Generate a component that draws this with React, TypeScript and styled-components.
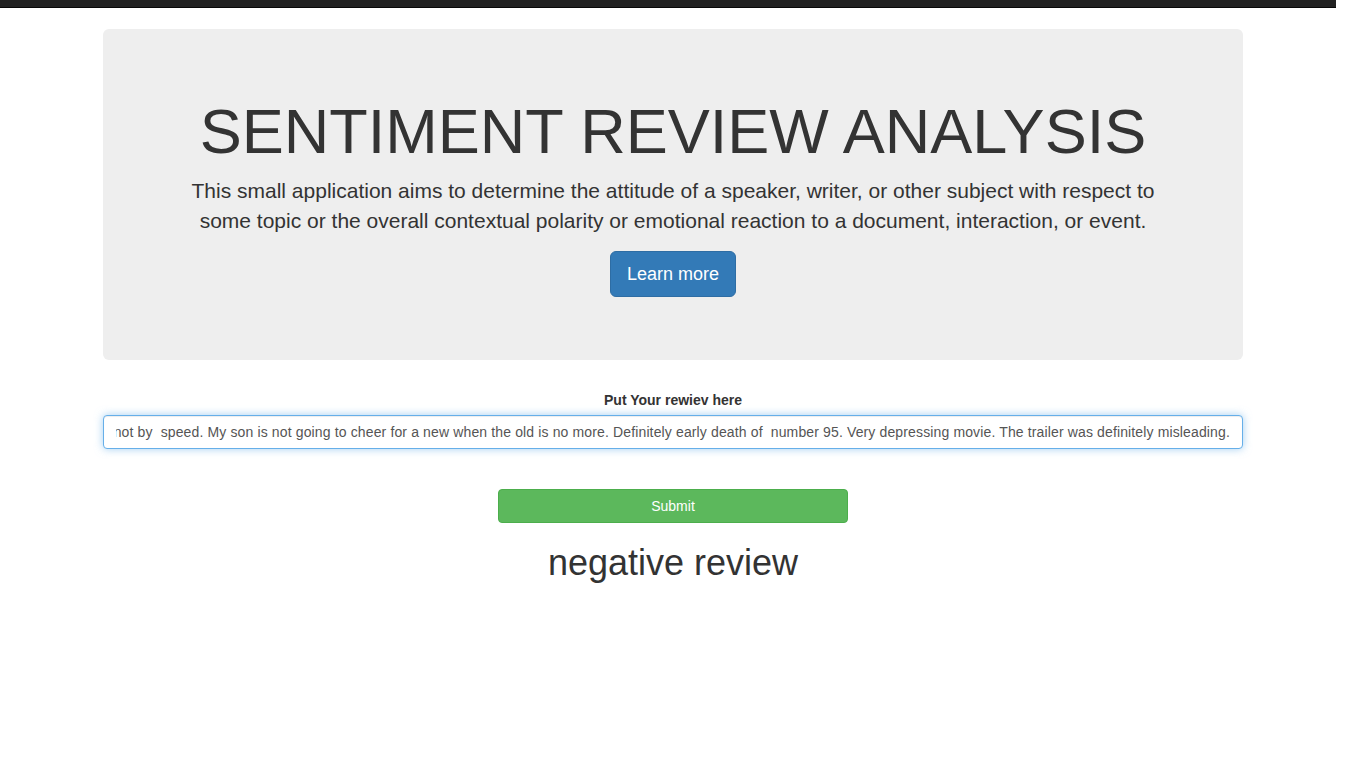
import React from "react";
import styled, { createGlobalStyle } from "styled-components";

const Global = createGlobalStyle`
  html, body { margin: 0; padding: 0; background: #fff; }
  body {
    font-family: "Liberation Sans", Arial, Helvetica, sans-serif;
    font-size: 14px;
    line-height: 1.42857;
    color: #333;
  }
  * { box-sizing: border-box; }
`;

const TopBar = styled.div`
  width: 1336px;
  height: 8px;
  background: #222;
  border-bottom: 1px solid #080808;
`;

const Page = styled.div`
  width: 1346px;
  padding-top: 21px;
`;

const Container = styled.main`
  width: 1140px;
  margin: 0 auto;
  display: flex;
  flex-direction: column;
  align-items: stretch;
`;

const Jumbotron = styled.section`
  background: #eee;
  border-radius: 6px;
  padding: 48px 60px;
  margin-bottom: 30px;
  text-align: center;
`;

const Title = styled.h1`
  margin: 20px 0 10px;
  font-size: 63px;
  font-weight: 400;
  line-height: 1.1;
  color: #333;
`;

const Lead = styled.p`
  margin: 0 0 15px;
  font-size: 21px;
  font-weight: 200;
  line-height: 30px;
  color: #333;
`;

const ButtonRow = styled.p`
  margin: 0 0 15px;
  display: flex;
  justify-content: center;
`;

const PrimaryButton = styled.a`
  display: inline-block;
  padding: 10px 16px;
  font-size: 18px;
  line-height: 1.3333333;
  border-radius: 6px;
  color: #fff;
  background: #337ab7;
  border: 1px solid #2e6da4;
  text-decoration: none;
  cursor: pointer;
`;

const FormGroup = styled.div`
  display: flex;
  flex-direction: column;
  align-items: stretch;
  margin-bottom: 40px;
`;

const Label = styled.label`
  display: block;
  text-align: center;
  font-weight: 700;
  font-size: 14px;
  line-height: 20px;
  margin-bottom: 5px;
  color: #333;
`;

const Field = styled.div`
  height: 34px;
  padding: 6px 12px;
  border: 1px solid #66afe9;
  border-radius: 4px;
  background: #fff;
  box-shadow: inset 0 1px 1px rgba(0, 0, 0, 0.075), 0 0 8px rgba(102, 175, 233, 0.6);
`;

const FieldText = styled.div`
  display: flex;
  justify-content: flex-end;
  overflow: hidden;
  white-space: pre;
  font-size: 14px;
  line-height: 20px;
  letter-spacing: 0.135px;
  color: #555;
`;

const SubmitButton = styled.button`
  align-self: center;
  width: 350px;
  height: 34px;
  padding: 6px 12px;
  font-family: inherit;
  font-size: 14px;
  line-height: 20px;
  color: #fff;
  background: #5cb85c;
  border: 1px solid #4cae4c;
  border-radius: 4px;
  cursor: pointer;
`;

const Result = styled.h1`
  margin: 20px 0 0;
  text-align: center;
  font-size: 36px;
  font-weight: 400;
  line-height: 1.1;
  color: #333;
`;

const review =
  "Lightning McQueen is beaten by a new generation of racers who win by technology and not by  speed. My son is not going to cheer for a new when the old is no more. Definitely early death of  number 95. Very depressing movie. The trailer was definitely misleading.";

export default function App() {
  return (
    <>
      <Global />
      <TopBar />
      <Page>
        <Container>
          <Jumbotron>
            <Title>SENTIMENT REVIEW ANALYSIS</Title>
            <Lead>
              This small application aims to determine the attitude of a speaker, writer, or other subject with
              respect to some topic or the overall contextual polarity or emotional reaction to a document,
              interaction, or event.
            </Lead>
            <ButtonRow>
              <PrimaryButton role="button">Learn more</PrimaryButton>
            </ButtonRow>
          </Jumbotron>
          <FormGroup>
            <Label>Put Your rewiev here</Label>
            <Field>
              <FieldText>
                <span>{review}</span>
              </FieldText>
            </Field>
          </FormGroup>
          <SubmitButton type="button">Submit</SubmitButton>
          <Result>negative review</Result>
        </Container>
      </Page>
    </>
  );
}
